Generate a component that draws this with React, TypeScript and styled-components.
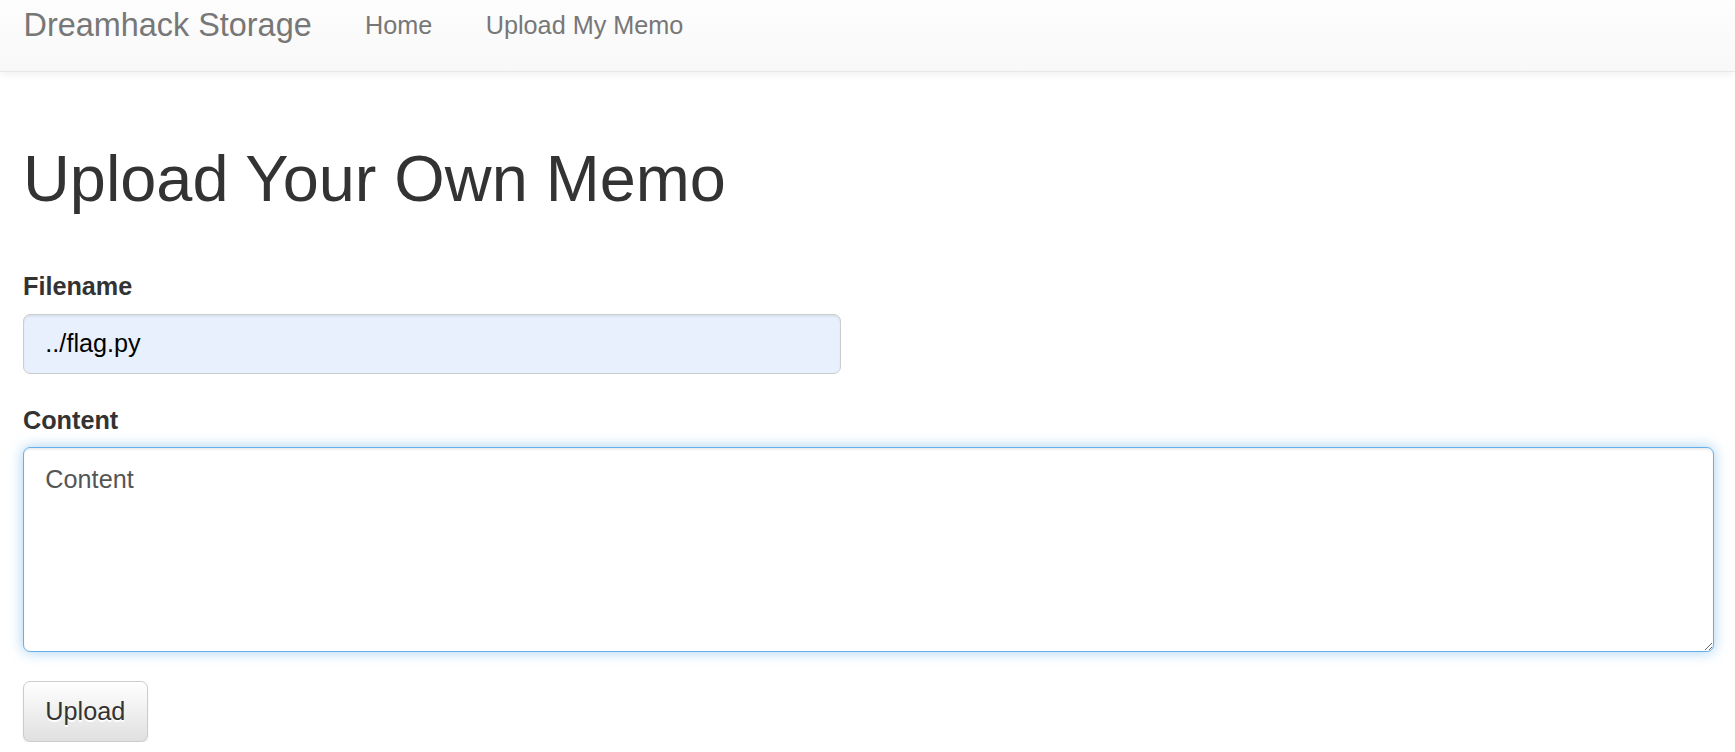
import React from "react";
import styled, { createGlobalStyle } from "styled-components";

const Z = 1.78;
const px = (v: number) => `${(v * Z).toFixed(2)}px`;
const fs = (v: number) => `${(v * Z * 1.012).toFixed(2)}px`;

const Global = createGlobalStyle`
  html, body {
    margin: 0;
    padding: 0;
    background: #fff;
  }
  body {
    font-family: "Liberation Sans", Arial, Helvetica, sans-serif;
    font-size: ${fs(14)};
    line-height: 1.428571;
    color: #333;
  }
  * { box-sizing: border-box; }
`;

const Navbar = styled.nav`
  height: 72px;
  background-image: linear-gradient(to bottom, #fdfdfd 0%, #f8f8f8 100%);
  border-bottom: ${px(1)} solid #e7e7e7;
  box-shadow: 0 ${px(1)} ${px(5)} rgba(0, 0, 0, 0.075);
  display: flex;
  align-items: flex-start;
  padding: 8px 0 0 23.5px;
`;

const Brand = styled.a`
  font-size: ${fs(18)};
  line-height: ${px(20)};
  color: #777;
  text-decoration: none;
  padding-right: ${px(15)};
`;

const NavList = styled.ul`
  list-style: none;
  margin: 0;
  padding: 0;
  display: flex;
`;

const NavLink = styled.a`
  display: block;
  font-size: ${fs(14)};
  line-height: ${px(20)};
  color: #777;
  text-decoration: none;
  padding: 0 ${px(15)};
`;

const Container = styled.main`
  padding: ${px(20)} 20.7px 0 23px;
`;

const Title = styled.h1`
  font-size: ${fs(36)};
  font-weight: 500;
  line-height: ${px(39.6)};
  margin: 36.5px 0 54.8px;
  color: #333;
`;

const Form = styled.form`
  display: flex;
  flex-direction: column;
  align-items: flex-start;
`;

const Group = styled.div<{ $full?: boolean }>`
  display: flex;
  flex-direction: column;
  width: ${(p) => (p.$full ? "100%" : "auto")};
  margin-bottom: 29px;
`;

const Label = styled.label`
  font-weight: 700;
  font-size: ${fs(14)};
  line-height: ${px(20)};
  margin-bottom: ${px(5)};
  color: #333;
`;

const Input = styled.input`
  width: 818.4px;
  height: 60px;
  padding: ${px(6)} ${px(12)};
  font-family: inherit;
  font-size: ${fs(14)};
  line-height: ${px(20)};
  color: #000;
  background: #e8f0fe;
  border: ${px(1)} solid #ccc;
  border-radius: ${px(4)};
  box-shadow: inset 0 ${px(1)} ${px(1)} rgba(0, 0, 0, 0.075);
  outline: none;
`;

const TextArea = styled.textarea`
  width: 100%;
  height: 205px;
  padding: 14px ${px(12)} ${px(6)};
  font-family: inherit;
  font-size: ${fs(14)};
  line-height: ${px(20)};
  color: #555;
  background: #fff;
  border: ${px(1)} solid #66afe9;
  border-radius: ${px(4)};
  box-shadow: inset 0 ${px(1)} ${px(1)} rgba(0, 0, 0, 0.075),
    0 0 ${px(8)} rgba(102, 175, 233, 0.6);
  outline: none;
  resize: vertical;
  display: block;
`;

const Button = styled.button`
  height: 61px;
  padding: ${px(6)} ${px(12)};
  font-family: inherit;
  font-size: ${fs(14)};
  line-height: ${px(20)};
  color: #333;
  text-shadow: 0 ${px(1)} 0 #fff;
  background-image: linear-gradient(to bottom, #fff 0%, #e0e0e0 100%);
  border: ${px(1)} solid #ccc;
  border-radius: ${px(4)};
  box-shadow: inset 0 ${px(1)} 0 rgba(255, 255, 255, 0.15),
    0 ${px(1)} ${px(1)} rgba(0, 0, 0, 0.075);
  cursor: pointer;
`;

export default function App() {
  return (
    <>
      <Global />
      <Navbar>
        <Brand href="#">Dreamhack Storage</Brand>
        <NavList>
          <li>
            <NavLink href="#">Home</NavLink>
          </li>
          <li>
            <NavLink href="#">Upload My Memo</NavLink>
          </li>
        </NavList>
      </Navbar>
      <Container>
        <Title>Upload Your Own Memo</Title>
        <Form onSubmit={(e) => e.preventDefault()}>
          <Group>
            <Label htmlFor="filename">Filename</Label>
            <Input id="filename" defaultValue="../flag.py" />
          </Group>
          <Group $full>
            <Label htmlFor="content">Content</Label>
            <TextArea id="content" rows={5} defaultValue="Content" />
          </Group>
          <Button type="submit">Upload</Button>
        </Form>
      </Container>
    </>
  );
}
